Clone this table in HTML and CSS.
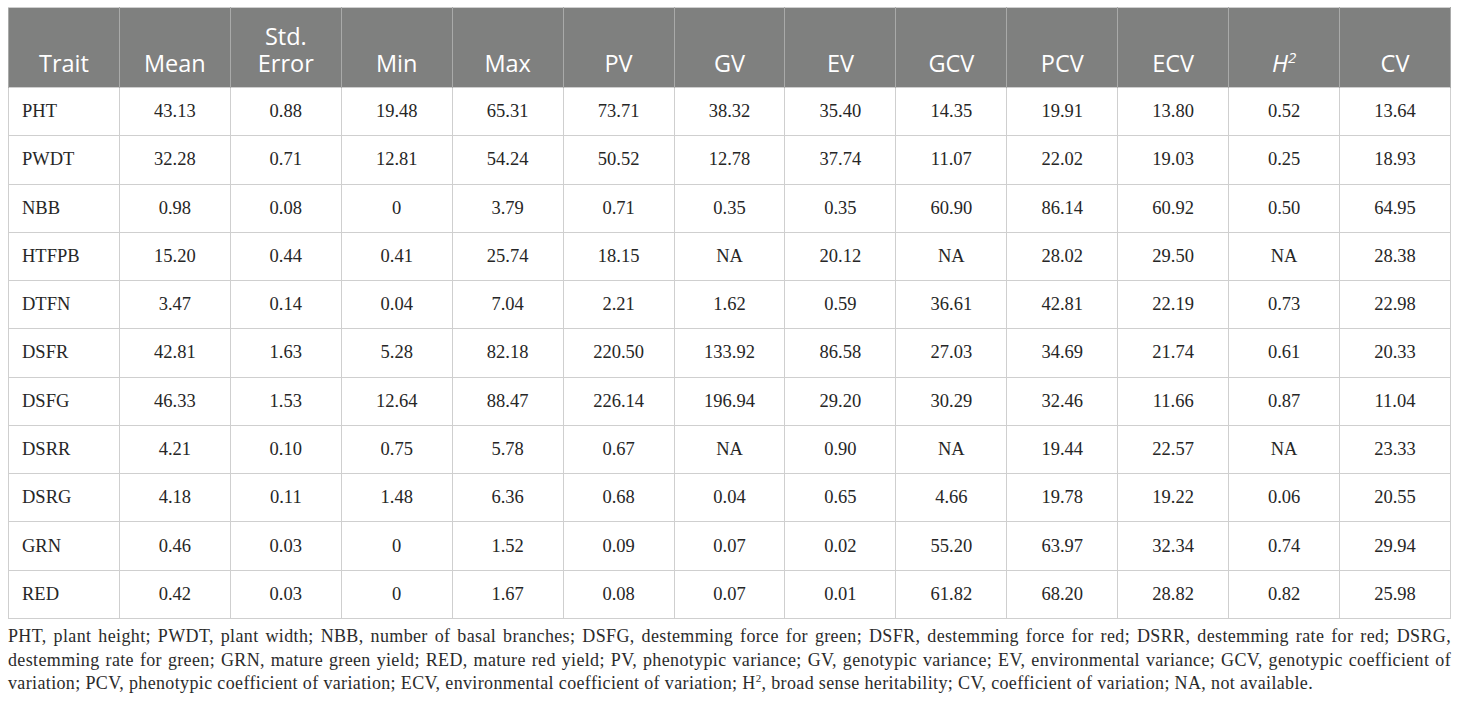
FILE: index.html
```html
<!DOCTYPE html>
<html>
<head>
<meta charset="utf-8">
<link rel="stylesheet" href="styles.css">
</head>
<body>
<div class="wrap">
<table class="data">
<thead>
<tr>
<th>Trait</th><th>Mean</th><th>Std.<br>Error</th><th>Min</th><th>Max</th><th>PV</th><th>GV</th><th>EV</th><th>GCV</th><th>PCV</th><th>ECV</th><th><i>H<sup>2</sup></i></th><th>CV</th>
</tr>
</thead>
<tbody>
<tr><td>PHT</td><td>43.13</td><td>0.88</td><td>19.48</td><td>65.31</td><td>73.71</td><td>38.32</td><td>35.40</td><td>14.35</td><td>19.91</td><td>13.80</td><td>0.52</td><td>13.64</td></tr>
<tr><td>PWDT</td><td>32.28</td><td>0.71</td><td>12.81</td><td>54.24</td><td>50.52</td><td>12.78</td><td>37.74</td><td>11.07</td><td>22.02</td><td>19.03</td><td>0.25</td><td>18.93</td></tr>
<tr><td>NBB</td><td>0.98</td><td>0.08</td><td>0</td><td>3.79</td><td>0.71</td><td>0.35</td><td>0.35</td><td>60.90</td><td>86.14</td><td>60.92</td><td>0.50</td><td>64.95</td></tr>
<tr><td>HTFPB</td><td>15.20</td><td>0.44</td><td>0.41</td><td>25.74</td><td>18.15</td><td>NA</td><td>20.12</td><td>NA</td><td>28.02</td><td>29.50</td><td>NA</td><td>28.38</td></tr>
<tr><td>DTFN</td><td>3.47</td><td>0.14</td><td>0.04</td><td>7.04</td><td>2.21</td><td>1.62</td><td>0.59</td><td>36.61</td><td>42.81</td><td>22.19</td><td>0.73</td><td>22.98</td></tr>
<tr><td>DSFR</td><td>42.81</td><td>1.63</td><td>5.28</td><td>82.18</td><td>220.50</td><td>133.92</td><td>86.58</td><td>27.03</td><td>34.69</td><td>21.74</td><td>0.61</td><td>20.33</td></tr>
<tr><td>DSFG</td><td>46.33</td><td>1.53</td><td>12.64</td><td>88.47</td><td>226.14</td><td>196.94</td><td>29.20</td><td>30.29</td><td>32.46</td><td>11.66</td><td>0.87</td><td>11.04</td></tr>
<tr><td>DSRR</td><td>4.21</td><td>0.10</td><td>0.75</td><td>5.78</td><td>0.67</td><td>NA</td><td>0.90</td><td>NA</td><td>19.44</td><td>22.57</td><td>NA</td><td>23.33</td></tr>
<tr><td>DSRG</td><td>4.18</td><td>0.11</td><td>1.48</td><td>6.36</td><td>0.68</td><td>0.04</td><td>0.65</td><td>4.66</td><td>19.78</td><td>19.22</td><td>0.06</td><td>20.55</td></tr>
<tr><td>GRN</td><td>0.46</td><td>0.03</td><td>0</td><td>1.52</td><td>0.09</td><td>0.07</td><td>0.02</td><td>55.20</td><td>63.97</td><td>32.34</td><td>0.74</td><td>29.94</td></tr>
<tr><td>RED</td><td>0.42</td><td>0.03</td><td>0</td><td>1.67</td><td>0.08</td><td>0.07</td><td>0.01</td><td>61.82</td><td>68.20</td><td>28.82</td><td>0.82</td><td>25.98</td></tr>
</tbody>
</table>
<p class="note">PHT, plant height; PWDT, plant width; NBB, number of basal branches; DSFG, destemming force for green; DSFR, destemming force for red; DSRR, destemming rate for red; DSRG, destemming rate for green; GRN, mature green yield; RED, mature red yield; PV, phenotypic variance; GV, genotypic variance; EV, environmental variance; GCV, genotypic coefficient of variation; PCV, phenotypic coefficient of variation; ECV, environmental coefficient of variation; H<sup>2</sup>, broad sense heritability; CV, coefficient of variation; NA, not available.</p>
</div>
</body>
</html>
```
FILE: styles.css
```css
html, body {
  margin: 0;
  padding: 0;
  background: #ffffff;
}
.wrap {
  padding: 7px 9px 0 8px;
}
.data {
  width: 1443px;
  border-collapse: collapse;
  table-layout: fixed;
  border: 1px solid #cfcfcf;
}
.data th {
  background: #7f807f;
  color: #ffffff;
  font-family: "Open Sans", "Noto Sans", sans-serif;
  font-weight: 400;
  font-size: 23.5px;
  line-height: 27px;
  height: 80px;
  box-sizing: border-box;
  padding: 0 4px 10px;
  vertical-align: bottom;
  text-align: center;
  border-left: 1px solid #a9aaa9;
  border-right: 1px solid #a9aaa9;
  border-top: 1px solid #cfcfcf;
}
.data th sup {
  font-size: 15px;
  line-height: 0;
  vertical-align: 9px;
}
.data td {
  font-family: "Liberation Serif", "Times New Roman", serif;
  font-size: 18.5px;
  color: #262626;
  height: 48.27px;
  box-sizing: border-box;
  padding: 0 8px;
  text-align: center;
  vertical-align: middle;
  border: 1px solid #cfcfcf;
}
.data td:first-child {
  text-align: left;
  padding-left: 13px;
}
.note {
  margin: 6px 0 0;
  width: 1443px;
  font-family: "Liberation Serif", "Times New Roman", serif;
  font-size: 18px;
  letter-spacing: 0.36px;
  line-height: 23.7px;
  color: #2b2b2b;
  text-align: justify;
}
.note sup {
  font-size: 11px;
  line-height: 0;
}
```
